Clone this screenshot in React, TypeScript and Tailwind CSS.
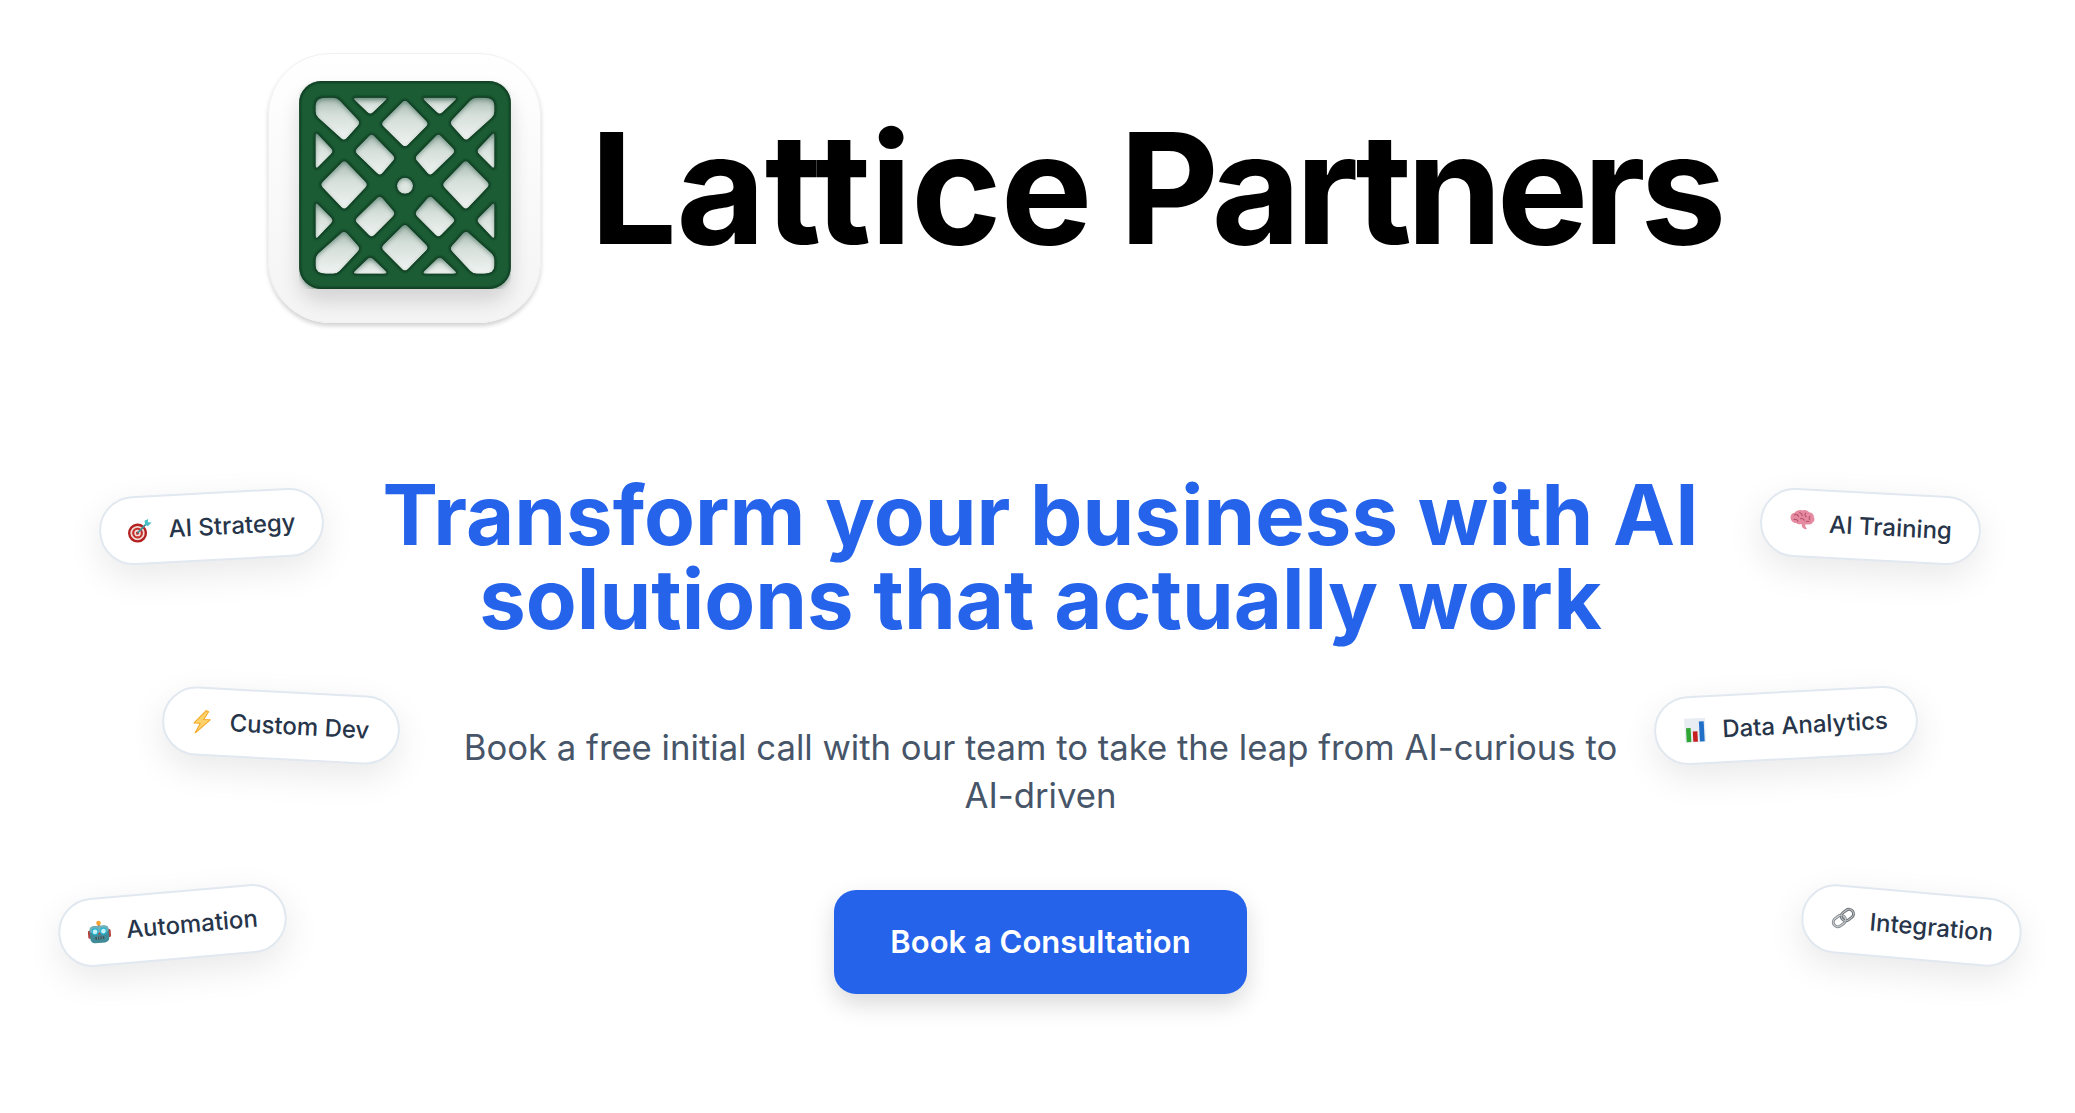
import React from "react";

type P = [number, number];
const base: P[][] = [
  [[465, 180], [537, 253], [465, 325], [392, 253]],
  [[365, 282], [437, 355], [390, 410], [313, 335]],
  [[197, 175], [262, 175], [332, 250], [283, 305], [197, 228]],
  [[307, 175], [415, 175], [361, 227]],
  [[197, 277], [252, 335], [197, 390]],
];
const diamondSide: P[] = [[283, 361], [355, 435], [283, 512], [210, 435]];
const mx = (p: P[]): P[] => p.map(([x, y]) => [930 - x, y]);
const my = (p: P[]): P[] => p.map(([x, y]) => [x, 877 - y]);
const holes: P[][] = [];
for (const h of base) {
  if (h === base[0]) holes.push(h, my(h));
  else holes.push(h, mx(h), my(h), mx(my(h)));
}
holes.push(diamondSide, mx(diamondSide));

function rounded(pts: P[], r: number) {
  let d = "";
  pts.forEach((p, i) => {
    const a = pts[(i - 1 + pts.length) % pts.length];
    const b = pts[(i + 1) % pts.length];
    const la = Math.hypot(a[0] - p[0], a[1] - p[1]);
    const lb = Math.hypot(b[0] - p[0], b[1] - p[1]);
    const rr = pts.length === 5 && i === 0 ? 30 : r;
    const ra = Math.min(rr, la / 2.2);
    const rb = Math.min(rr, lb / 2.2);
    const s = [p[0] + ((a[0] - p[0]) * ra) / la, p[1] + ((a[1] - p[1]) * ra) / la];
    const e = [p[0] + ((b[0] - p[0]) * rb) / lb, p[1] + ((b[1] - p[1]) * rb) / lb];
    d += `${i === 0 ? "M" : "L"}${s[0].toFixed(1)} ${s[1].toFixed(1)}Q${p[0]} ${p[1]} ${e[0].toFixed(1)} ${e[1].toFixed(1)}`;
  });
  return d + "Z";
}
const outer = "M214 125H716A66 66 0 0 1 782 191V682A66 66 0 0 1 716 748H214A66 66 0 0 1 148 682V191A66 66 0 0 1 214 125Z";
const circle = "M465 415A24 24 0 1 0 465 463A24 24 0 1 0 465 415Z";
const holePaths = holes.map((h) => rounded(h, 12));
const lattice = outer + holePaths.join("") + circle;

function Lattice() {
  return (
    <svg viewBox="148 125 634 623" className="block w-[212px] h-[208px]">
      <defs>
        <linearGradient id="holeFill" x1="0" y1="0" x2="0" y2="1">
          <stop offset="0" stopColor="#a8bcb2" />
          <stop offset="0.4" stopColor="#d5dfda" />
          <stop offset="1" stopColor="#f0f4f2" />
        </linearGradient>
        <filter id="cast" x="-10%" y="-10%" width="120%" height="120%">
          <feDropShadow dx="0" dy="6" stdDeviation="6" floodColor="#0d3b20" floodOpacity="0.4" />
        </filter>
        <filter id="soft">
          <feGaussianBlur stdDeviation="3" />
        </filter>
        <clipPath id="latticeClip">
          <path d={lattice} clipRule="evenodd" />
        </clipPath>
      </defs>
      {holePaths.map((d, i) => (
        <path key={i} d={d} fill="url(#holeFill)" />
      ))}
      <path d={circle} fill="#dfe7e3" />
      <g filter="url(#cast)">
        <path d={lattice} fill="#1d5c36" fillRule="evenodd" />
      </g>
      <g clipPath="url(#latticeClip)">
        <path d={lattice} fill="none" stroke="#0f3b20" strokeWidth="10" filter="url(#soft)" />
      </g>
    </svg>
  );
}

const Target = () => (
  <svg viewBox="0 0 24 24" className="w-[26px] h-[26px] shrink-0 -mr-[1px]">
    <circle cx="9.5" cy="14" r="8.8" fill="#b3201f" />
    <circle cx="9.5" cy="14" r="6.6" fill="#eed9d4" />
    <circle cx="9.5" cy="14" r="5" fill="#c5302b" />
    <circle cx="9.5" cy="14" r="3" fill="#f0dcd8" />
    <circle cx="9.5" cy="14" r="1.5" fill="#c5302b" />
    <path d="M10 13.5 18 6" stroke="#3d8f96" strokeWidth="1.6" strokeLinecap="round" />
    <path d="M17 7 16.5 3 20 1.5 19.5 4.5 23 5 19.5 8Z" fill="#45c0c6" />
  </svg>
);
const Bolt = () => (
  <svg viewBox="0 0 18 24" className="w-[18px] h-[24px] shrink-0 mr-[3px]">
    <path d="M12.5 .5 1 13.5h6.2L2.6 23.5 17 9.5h-6.5L15 1.5Z" fill="#fdd26a" stroke="#f5a623" strokeWidth="1" strokeLinejoin="round" />
  </svg>
);
const Robot = () => (
  <svg viewBox="0 0 24 24" className="w-[24px] h-[24px] shrink-0 -mr-[1px]">
    <rect x="11" y="2.5" width="2" height="4" fill="#b76a4c" />
    <circle cx="12" cy="2.6" r="2.3" fill="#f4a32e" />
    <rect x=".6" y="9.5" width="3.4" height="8" rx="1.4" fill="#b3423f" />
    <rect x="20" y="9.5" width="3.4" height="8" rx="1.4" fill="#b3423f" />
    <rect x="2.5" y="5.5" width="19" height="17" rx="4.5" fill="#3f8b98" />
    <rect x="2.5" y="5.5" width="19" height="7" rx="3.5" fill="#6fb0ba" />
    <circle cx="7.8" cy="11" r="2.9" fill="#c9f1f7" stroke="#25b7d3" strokeWidth="1.1" />
    <circle cx="16.2" cy="11" r="2.9" fill="#c9f1f7" stroke="#25b7d3" strokeWidth="1.1" />
    <path d="M12 11.5l1.4 2.5h-2.8Z" fill="#c9453f" />
    <rect x="7.5" y="16.2" width="9" height="2.8" rx="1" fill="#33535b" />
    <path d="M9.6 16.2v2.8M12 16.2v2.8M14.4 16.2v2.8" stroke="#9fb5ba" strokeWidth=".6" />
  </svg>
);
const Brain = () => (
  <svg viewBox="0 0 26 22" className="w-[26px] h-[22px] shrink-0 -translate-y-[3px] -mr-[2px]">
    <path d="M12.5 1c3-1.2 6 .2 7 1.6 2.6 .1 5 2.2 5 4.6 1.4 2 .6 4.4-1 5.4-.5 1.6-2.6 2.4-4 1.900-1.200 .5-2.300 .5-3.200 .1-.3 1.200 .3 3 2 4.800-2.200 .6-4.600-.4-5.300-2.500-.2-1-.1-1.800-.4-2.400-2 .9-4.300 .6-5.600-.7-2.600 .2-5.200-1.700-5.700-4.200C.8 6.600 2.500 4 5 3.700 6.500 1.400 9.800 .2 12.500 1Z" fill="#e58aa0" />
    <path d="M5 6c2-1.500 4 0 4 1.500M10 3.500c1.800 .2 2.800 1.500 2.600 3M16 3.500c-1 1.400-.6 3 .8 3.700M20.500 6.500c-1 1-1 2.500 .2 3.500M4.500 10.500c1.800-.6 3.600 .2 4.200 1.500M11 9.500c1.500-.8 3.200-.3 4 1.200M17 12c1-.6 2-.6 3-.2" fill="none" stroke="#b24f6c" strokeWidth="1" strokeLinecap="round" />
  </svg>
);
const Chart = () => (
  <svg viewBox="0 0 22 25" className="w-[22px] h-[25px] shrink-0">
    <rect x=".5" y=".5" width="21" height="24" fill="#e7edf3" />
    <rect x="2" y="10" width="4.600" height="14" fill="#2fa532" />
    <rect x="8.600" y="13.500" width="4.600" height="10.500" fill="#c51f1f" />
    <rect x="15.200" y="4" width="4.800" height="20" fill="#1f6fc9" />
  </svg>
);
const Link = () => (
  <svg viewBox="0 0 26 24" className="w-[26px] h-[24px] shrink-0 -translate-y-[2px] -mr-[2px]">
    <g fill="none" strokeWidth="3" transform="rotate(-42 13 12)">
      <rect x="1.500" y="7.500" width="13" height="9" rx="4.500" stroke="#8a8f94" />
      <rect x="11.500" y="7.500" width="13" height="9" rx="4.500" stroke="#6d7277" />
    </g>
    <g fill="none" strokeWidth="1" transform="rotate(-42 13 12)">
      <rect x="1.500" y="7.500" width="13" height="9" rx="4.500" stroke="#d3d6d9" />
      <rect x="11.500" y="7.500" width="13" height="9" rx="4.500" stroke="#c3c7ca" />
    </g>
  </svg>
);

function Pill({ className, icon, label }: { className: string; icon: React.ReactNode; label: string }) {
  return (
    <div
      className={`absolute flex items-center justify-center gap-[16px] h-[69px] rounded-full bg-white border-2 border-[#e2e8f0] shadow-[0_12px_36px_rgba(0,0,0,0.09)] text-[24px] font-medium text-[#27354a] whitespace-nowrap ${className}`}
    >
      {icon}
      <span>{label}</span>
    </div>
  );
}

export default function App() {
  return (
    <div className="relative w-full h-[1113px] overflow-hidden bg-white font-['Inter',sans-serif]">
      <header className="flex items-center gap-[49px] pt-[53px] pl-[268px]">
        <div className="flex items-center justify-center w-[273px] h-[270px] pb-[6px] rounded-[62px] bg-gradient-to-b from-white to-[#f4f4f4] border border-[#f1f1f1] shadow-[0_3px_4px_rgba(0,0,0,0.18)]">
          <div className="rounded-[22px] shadow-[0_12px_20px_rgba(0,0,0,0.14)]">
            <Lattice />
          </div>
        </div>
        <h1 className="text-[154px] leading-none font-bold text-black whitespace-nowrap [word-spacing:-9px]">
          <span className="tracking-[-0.9px]">Lattice</span> <span className="tracking-[-5.5px]">Partners</span>
        </h1>
      </header>

      <main className="flex flex-col items-center pl-[6px] pt-[150px]">
        <h2 className="text-[83.2px] leading-[84px] font-bold text-[#2563eb] text-center whitespace-nowrap">
          Transform your business with AI
          <br />
          solutions that actually work
        </h2>
        <p className="mt-[82px] w-[1200px] text-[34.7px] leading-[48px] text-[#475569] text-center">
          Book a free initial call with our team to take the leap from AI-curious to AI-driven
        </p>
        <button className="mt-[71px] w-[413px] h-[104px] rounded-[22px] bg-[#2563eb] text-white text-[31px] font-semibold shadow-[0_10px_25px_rgba(0,0,0,0.15)]">
          Book a Consultation
        </button>
      </main>

      <Pill className="left-[99px] top-[492px] w-[225px] -rotate-3" icon={<Target />} label="AI Strategy" />
      <Pill className="left-[162px] top-[691px] w-[238px] rotate-3" icon={<Bolt />} label="Custom Dev" />
      <Pill className="left-[58px] top-[891px] w-[229px] -rotate-5" icon={<Robot />} label="Automation" />
      <Pill className="left-[1760px] top-[492px] w-[221px] rotate-3" icon={<Brain />} label="AI Training" />
      <Pill className="left-[1654px] top-[691px] w-[264px] -rotate-3" icon={<Chart />} label="Data Analytics" />
      <Pill className="left-[1801px] top-[891px] w-[221px] rotate-5" icon={<Link />} label="Integration" />
    </div>
  );
}
